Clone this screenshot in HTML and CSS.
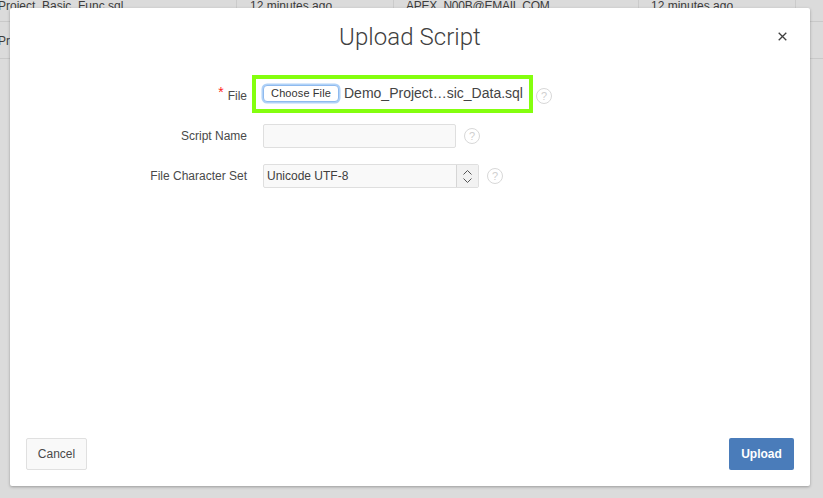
FILE: index.html
```html
<!DOCTYPE html>
<html lang="en">
<head>
<meta charset="utf-8">
<title>Upload Script</title>
<link rel="stylesheet" href="styles.css">
</head>
<body>
<div class="bg-table">
  <div class="bg-row bg-row-first">
    <span class="c c1">Project_Basic_Func.sql</span>
    <span class="c c2">12 minutes ago</span>
    <span class="c c3">APEX_N00B@EMAIL.COM</span>
    <span class="c c4">12 minutes ago</span>
    <span class="c c5"></span>
  </div>
  <div class="bg-row">
    <span class="c c1">Project_Basic_Data.sql</span>
    <span class="c c2"></span>
    <span class="c c3"></span>
    <span class="c c4"></span>
    <span class="c c5"></span>
  </div>
</div>

<div class="dialog" role="dialog">
  <header class="dialog-head">
    <h1 class="dialog-title">Upload Script</h1>
    <button class="close" aria-label="Close">
      <svg width="9" height="9" viewBox="0 0 9 9"><path d="M.7.7l7.6 7.6M8.3.7L.7 8.3" stroke="#404040" stroke-width="1.3" fill="none"/></svg>
    </button>
  </header>

  <div class="form">
    <div class="field field-file">
      <label class="label"><span class="req">*</span>File</label>
      <div class="file-box">
        <span class="file-btn">Choose File</span>
        <span class="file-name">Demo_Project…sic_Data.sql</span>
      </div>
      <span class="help help-file">?</span>
    </div>
    <div class="field field-name">
      <label class="label">Script Name</label>
      <div class="input"></div>
      <span class="help">?</span>
    </div>
    <div class="field field-set">
      <label class="label">File Character Set</label>
      <div class="select">
        <span class="select-text">Unicode UTF-8</span>
        <span class="select-arrows">
          <svg width="11" height="15" viewBox="0 0 11 15"><path d="M1.5 5.5l4-4 4 4M1.5 9.5l4 4 4-4" stroke="#555" stroke-width="1" fill="none"/></svg>
        </span>
      </div>
      <span class="help">?</span>
    </div>
  </div>

  <footer class="dialog-foot">
    <button class="btn btn-cancel">Cancel</button>
    <button class="btn btn-upload">Upload</button>
  </footer>
</div>
</body>
</html>
```
FILE: styles.css
```css
* { box-sizing: border-box; }
html, body { margin: 0; height: 100%; }
body {
  width: 823px;
  height: 498px;
  overflow: hidden;
  position: relative;
  background: #dbdbdb;
  font-family: "Liberation Sans", Arial, sans-serif;
  color: #404040;
}
.bg-table { font-size: 12px; color: #3c3c3c; }
.bg-row {
  display: flex;
  height: 37px;
  border-bottom: 1px solid #c9c9c9;
  line-height: 38px;
}
.bg-row-first { height: 22px; line-height: 12px; }
.c { border-right: 1px solid #cbcbcb; padding-left: 12px; white-space: nowrap; overflow: hidden; }
.c1 { width: 239px; padding-left: 0; margin-left: -2px; }
.c2 { width: 157px; padding-left: 13px; }
.c3 { width: 245px; letter-spacing: -.25px; }
.c4 { width: 157px; }
.c5 { flex: 1; border-right: 0; }

.dialog {
  position: absolute;
  left: 10px;
  top: 8px;
  width: 800px;
  height: 478px;
  background: #fff;
  border-radius: 2px;
  box-shadow: 0 1px 3px rgba(0,0,0,.3);
  display: flex;
  flex-direction: column;
}
.dialog-head {
  height: 67px;
  position: relative;
  flex: none;
}
.dialog-title {
  margin: 0;
  padding-top: 15px;
  text-align: center;
  font-family: Roboto, "Liberation Sans", sans-serif;
  font-weight: 300;
  font-size: 24px;
  letter-spacing: .05px;
  line-height: 28px;
  color: #404040;
}
.close {
  position: absolute;
  left: 768px;
  top: 24px;
  width: 10px;
  height: 10px;
  padding: 0;
  border: 0;
  background: none;
  display: flex;
}
.form { flex: 1; }
.field { display: flex; align-items: center; }
.label {
  width: 237px;
  text-align: right;
  font-size: 12px;
  color: #4a4a4a;
  flex: none;
}
.field-file .label { padding-top: 1px; }
.req { color: #f22; font-size: 14px; margin-right: 4px; position: relative; top: -3px; }
.field-file { height: 38px; }
.field-name { height: 24px; margin-top: 11px; }
.field-set { height: 24px; margin-top: 16px; }

.file-box {
  margin-left: 5px;
  width: 281px;
  height: 38px;
  border: 4px solid #84ff0e;
  display: flex;
  align-items: center;
  padding-left: 7px;
  flex: none;
}
.file-btn {
  width: 76px;
  height: 17px;
  border: 1px solid #8fbaee;
  border-radius: 4px;
  box-shadow: 0 0 0 1.5px #b0d2f8;
  font-size: 11px;
  letter-spacing: .1px;
  line-height: 15px;
  text-align: center;
  color: #333;
  background: #fff;
  position: relative;
  top: -1px;
  flex: none;
}
.file-name {
  margin-left: 5px;
  font-size: 14px;
  color: #444;
  white-space: nowrap;
  position: relative;
  top: -1px;
}
.input, .select {
  margin-left: 16px;
  height: 24px;
  background: #f9f9f9;
  border: 1px solid #dfdfdf;
  border-radius: 2px;
  flex: none;
}
.input { width: 193px; }
.select {
  width: 216px;
  display: flex;
  align-items: center;
  font-size: 12px;
  color: #404040;
}
.select-text { flex: 1; padding-left: 3px; }
.select-arrows {
  width: 22px;
  height: 22px;
  border-left: 1px solid #d6d6d6;
  background: #f2f2f2;
  display: flex;
  align-items: center;
  justify-content: center;
  padding-right: 1px;
}
.help {
  width: 16px;
  height: 16px;
  margin-left: 8px;
  border: 1px solid #d8d8d8;
  border-radius: 50%;
  font-size: 11px;
  line-height: 14px;
  text-align: center;
  color: #cfcfcf;
  flex: none;
}
.help-file { margin-left: 3px; position: relative; top: 2px; }

.dialog-foot {
  flex: none;
  display: flex;
  justify-content: space-between;
  padding: 0 16px 16px;
}
.btn {
  height: 32px;
  border-radius: 2px;
  font-family: "Liberation Sans", Arial, sans-serif;
  font-size: 12px;
  padding: 0;
}
.btn-cancel {
  width: 61px;
  background: #f9f9f9;
  border: 1px solid #e0e0e0;
  color: #4a4a4a;
}
.btn-upload {
  width: 65px;
  background: #4a7cba;
  border: 0;
  color: #fff;
  font-weight: 700;
}
```
